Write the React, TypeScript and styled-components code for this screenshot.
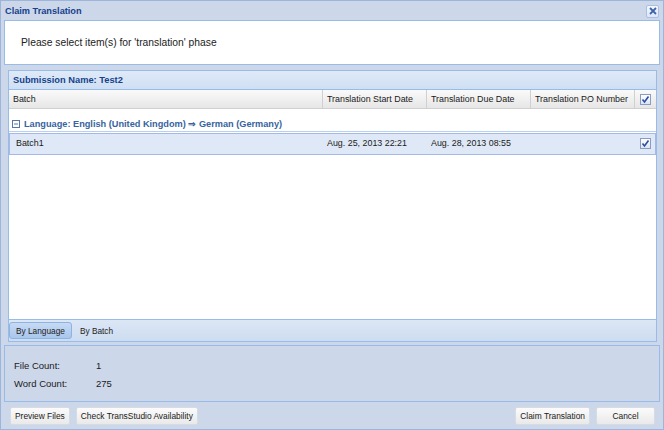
import React from 'react';
import styled, { createGlobalStyle } from 'styled-components';

const GlobalStyle = createGlobalStyle`
  html, body {
    margin: 0;
    padding: 0;
    background: #ffffff;
  }
  body {
    font-family: "Liberation Sans", Arial, sans-serif;
    color: #222;
  }
`;

const COLS = '314px 104px 104px 104px 1fr';

interface Row {
  batch: string;
  start: string;
  due: string;
  po: string;
}

const rows: Row[] = [
  { batch: 'Batch1', start: 'Aug. 25, 2013 22:21', due: 'Aug. 28, 2013 08:55', po: '' },
];

const Check = () => (
  <CheckBox>
    <svg width="9" height="9" viewBox="0 0 9 9">
      <path d="M1.5 4.5 L3.5 7 L7.5 1.5" fill="none" stroke="#2a4ea6" strokeWidth="1.6" />
    </svg>
  </CheckBox>
);

const App = () => {
  return (
    <>
      <GlobalStyle />
      <Window>
        <TitleBar>
          <span>Claim Translation</span>
          <CloseButton>
            <svg width="8" height="8" viewBox="0 0 8 8">
              <path d="M1 1 L7 7 M7 1 L1 7" stroke="#3d64a8" strokeWidth="1.8" />
            </svg>
          </CloseButton>
        </TitleBar>
        <Body>
          <Message>Please select item(s) for 'translation' phase</Message>
          <GridPanel>
            <PanelHeader>Submission Name: Test2</PanelHeader>
            <ColumnHeader>
              <HeadCell>Batch</HeadCell>
              <HeadCell>Translation Start Date</HeadCell>
              <HeadCell>Translation Due Date</HeadCell>
              <HeadCell>Translation PO Number</HeadCell>
              <HeadCell $center>
                <Check />
              </HeadCell>
            </ColumnHeader>
            <GridBody>
              <GroupRow>
                <svg width="8" height="8" viewBox="0 0 8 8">
                  <rect x="0.5" y="0.5" width="7" height="7" fill="#fff" stroke="#5a77a8" />
                  <path d="M2 4 H6" stroke="#5a77a8" strokeWidth="1" />
                </svg>
                <span>Language: English (United Kingdom) ⇒ German (Germany)</span>
              </GroupRow>
              {rows.map((r) => (
                <DataRow key={r.batch}>
                  <Cell $pad={6}>{r.batch}</Cell>
                  <Cell>{r.start}</Cell>
                  <Cell>{r.due}</Cell>
                  <Cell>{r.po}</Cell>
                  <Cell $center>
                    <Check />
                  </Cell>
                </DataRow>
              ))}
            </GridBody>
            <TabStrip>
              <Tab $active>By Language</Tab>
              <Tab>By Batch</Tab>
            </TabStrip>
          </GridPanel>
          <Summary>
            <Label>File Count:</Label>
            <Value>1</Value>
            <Label>Word Count:</Label>
            <Value>275</Value>
          </Summary>
        </Body>
        <Footer>
          <ButtonGroup>
            <Button>Preview Files</Button>
            <Button>Check TransStudio Availability</Button>
          </ButtonGroup>
          <ButtonGroup>
            <Button>Claim Translation</Button>
            <Button>Cancel</Button>
          </ButtonGroup>
        </Footer>
      </Window>
    </>
  );
};

export default App;

const Window = styled.div`
  width: 664px;
  height: 430px;
  box-sizing: border-box;
  border: 1px solid #9db5da;
  background: #cdd7ea;
  display: flex;
  flex-direction: column;
`;

const TitleBar = styled.div`
  height: 19px;
  display: flex;
  align-items: center;
  justify-content: space-between;
  padding: 0 4px 0 4px;
  font-size: 9.2px;
  font-weight: bold;
  color: #15428b;
`;

const CloseButton = styled.div`
  width: 11px;
  height: 11px;
  margin-top: 1px;
  border: 1px solid #a9c0e4;
  border-radius: 2px;
  background: linear-gradient(#f4f8fd, #dbe6f6);
  display: flex;
  align-items: center;
  justify-content: center;
`;

const Body = styled.div`
  flex: 1;
  display: flex;
  flex-direction: column;
  padding: 0 3px;
  min-height: 0;
`;

const Message = styled.div`
  height: 43px;
  background: #fff;
  border: 1px solid #99bbe8;
  padding-left: 16px;
  display: flex;
  align-items: center;
  font-size: 10.3px;
  color: #222;
`;

const GridPanel = styled.div`
  flex: 1;
  margin: 5px 3px 0 4px;
  border: 1px solid #99bbe8;
  display: flex;
  flex-direction: column;
  min-height: 0;
`;

const PanelHeader = styled.div`
  height: 18px;
  display: flex;
  align-items: center;
  padding-left: 4px;
  background: linear-gradient(#dfeaf8, #cfdff3);
  border-bottom: 1px solid #99bbe8;
  font-size: 9.3px;
  font-weight: bold;
  color: #15428b;
`;

const ColumnHeader = styled.div`
  height: 18px;
  display: grid;
  grid-template-columns: ${COLS};
  background: linear-gradient(#fafafa, #e6e6e6);
  border-bottom: 1px solid #d0d0d0;
`;

const HeadCell = styled.div<{ $center?: boolean }>`
  display: flex;
  align-items: center;
  justify-content: ${(p) => (p.$center ? 'center' : 'flex-start')};
  padding-left: ${(p) => (p.$center ? '0' : '4px')};
  border-right: 1px solid #d0d0d0;
  font-size: 8.9px;
  color: #1a1a1a;
  white-space: nowrap;
  overflow: hidden;
  &:last-child {
    border-right: none;
  }
`;

const GridBody = styled.div`
  flex: 1;
  background: #fff;
`;

const GroupRow = styled.div`
  height: 15px;
  padding-top: 7px;
  display: flex;
  align-items: center;
  gap: 4px;
  padding-left: 3px;
  border-bottom: 1px solid #b9cfee;
  font-size: 9.2px;
  font-weight: bold;
  color: #3764a0;
`;

const DataRow = styled.div`
  height: 20px;
  display: grid;
  grid-template-columns: 313px 104px 104px 104px 1fr;
  background: #dfe8f6;
  border: 1px solid #a3bae9;
  margin-top: 1px;
`;

const Cell = styled.div<{ $center?: boolean; $pad?: number }>`
  display: flex;
  align-items: center;
  justify-content: ${(p) => (p.$center ? 'center' : 'flex-start')};
  padding-left: ${(p) => (p.$center ? 0 : p.$pad ?? 4)}px;
  padding-bottom: 2px;
  font-size: 8.9px;
  color: #1a1a1a;
  white-space: nowrap;
`;

const CheckBox = styled.div`
  width: 11px;
  height: 11px;
  box-sizing: border-box;
  border: 1px solid #8a9cc2;
  background: linear-gradient(#ffffff, #dce4f2);
  display: flex;
  align-items: center;
  justify-content: center;
`;

const TabStrip = styled.div`
  height: 21px;
  display: flex;
  align-items: center;
  gap: 1px;
  padding-left: 0;
  background: linear-gradient(#dce7f6, #cddcf0);
  border-top: 1px solid #99bbe8;
`;

const Tab = styled.div<{ $active?: boolean }>`
  height: 15px;
  display: flex;
  align-items: center;
  padding: 0 6px;
  font-size: 8.3px;
  color: #222;
  border: 1px solid ${(p) => (p.$active ? '#8db2e3' : 'transparent')};
  border-radius: 3px;
  background: ${(p) => (p.$active ? 'linear-gradient(#c6daf3, #a9c6ec)' : 'transparent')};
`;

const Summary = styled.div`
  height: 45px;
  margin-top: 3px;
  border: 1px solid #99bbe8;
  padding: 10px 0 0 9px;
  display: grid;
  grid-template-columns: 82px 1fr;
  grid-auto-rows: 18px;
  align-items: center;
  font-size: 9.5px;
  color: #1a1a1a;
`;

const Label = styled.div``;

const Value = styled.div``;

const Footer = styled.div`
  height: 27px;
  display: flex;
  justify-content: space-between;
  align-items: flex-start;
  padding: 5px 8px 0 9px;
  box-sizing: border-box;
`;

const ButtonGroup = styled.div`
  display: flex;
  gap: 6px;
`;

const Button = styled.div`
  height: 16px;
  min-width: 49px;
  padding: 0 4px;
  display: flex;
  align-items: center;
  justify-content: center;
  border: 1px solid #d6dbe4;
  border-radius: 2px;
  background: linear-gradient(#fbfbfb, #e9e9e9);
  font-size: 8.4px;
  color: #1a1a1a;
  white-space: nowrap;
`;
